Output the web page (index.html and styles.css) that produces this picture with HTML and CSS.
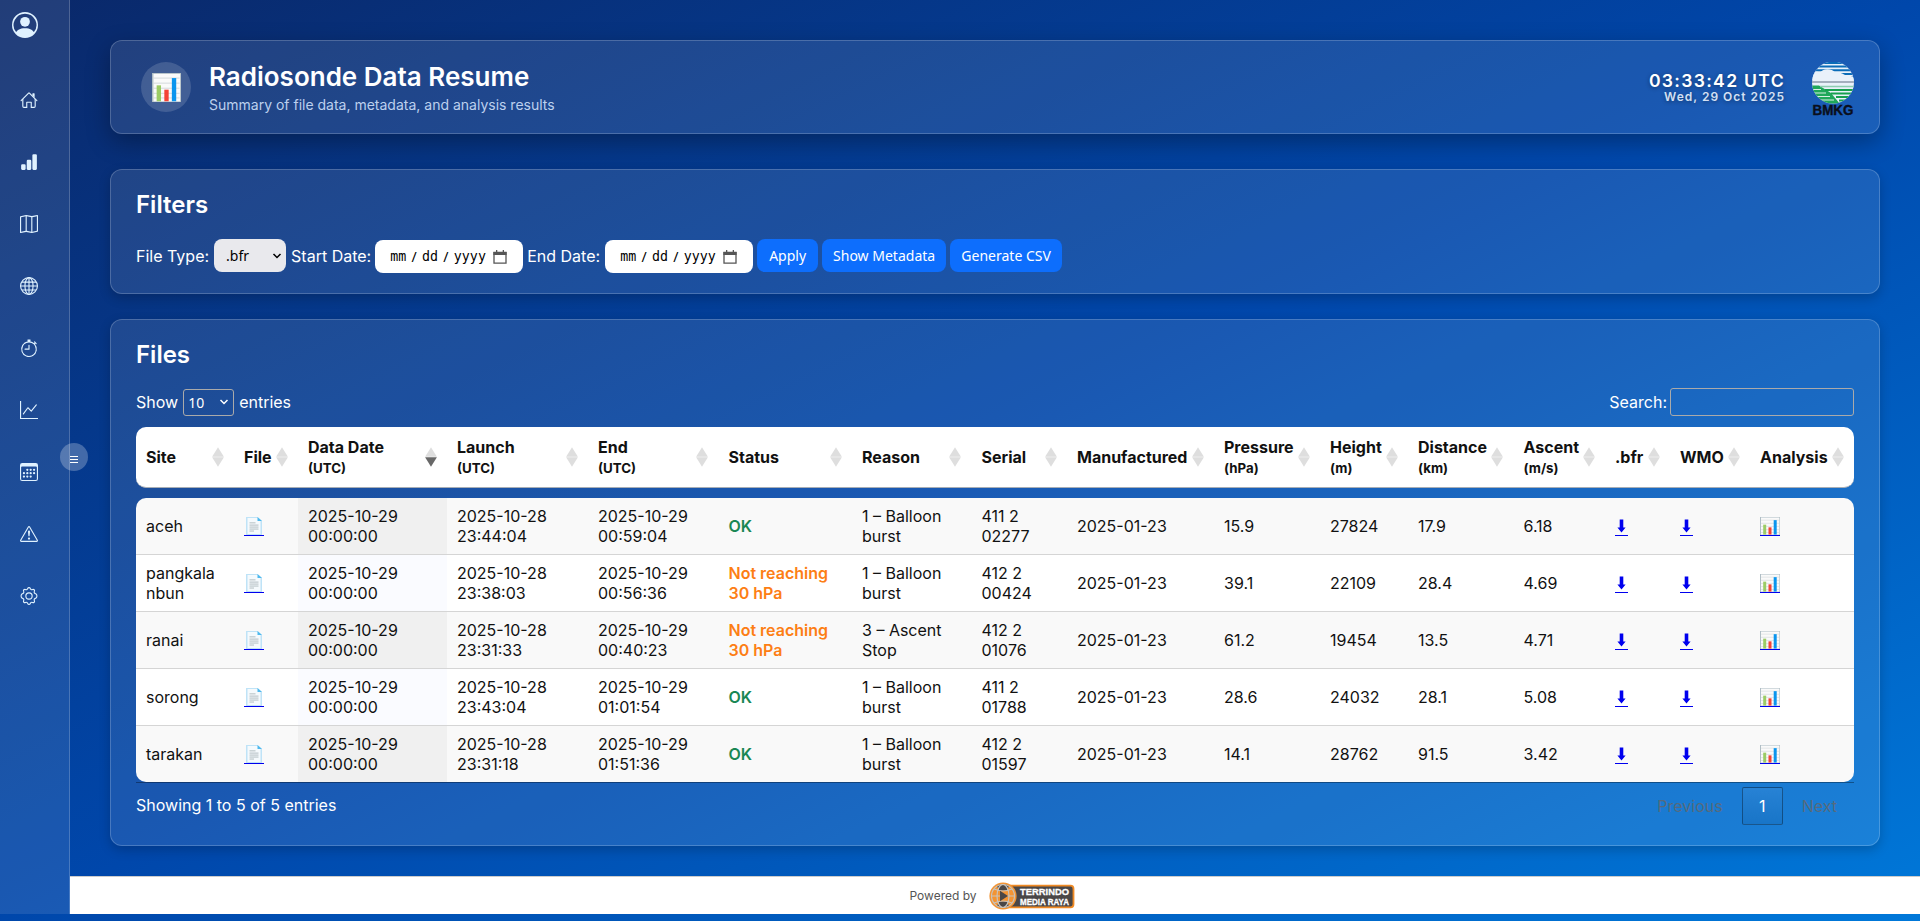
FILE: index.html
```html
<!DOCTYPE html>
<html lang="en">
<head>
<meta charset="utf-8">
<title>Radiosonde Data Resume</title>
<link rel="stylesheet" href="styles.css">
</head>
<body>
<svg class="defs" width="0" height="0" aria-hidden="true">
  <symbol id="doc" viewBox="0 0 20 20" preserveAspectRatio="none">
    <path d="M2 0h11.500l4.500 4.500v15.500h-16z" fill="#bfe3f7"/>
    <path d="M3.500 1h10l3 4v14h-13z" fill="#f5fafd"/>
    <path d="M13.500 0l4.500 4.500h-4.500z" fill="#4fb9ee"/>
    <path d="M5.500 6.500h6M5.500 9h9M5.500 11.200h9M5.500 13.400h9M5.500 15.600h4.500" stroke="#b0babf" stroke-width="1"/>
  </symbol>
  <symbol id="chart" viewBox="0 0 20 20" preserveAspectRatio="none">
    <rect width="20" height="20" fill="#b0bec5"/>
    <rect x="1" y=".6" width="18.400" height="19" fill="#fafafa"/>
    <path d="M1 3.500h18M1 7h18M1 10.500h18M1 14h18M1 17.200h18" stroke="#cfd4d8" stroke-width=".6"/>
    <rect x="3.200" y="8.500" width="3" height="11" fill="#9ccc65"/>
    <rect x="8.500" y="11.500" width="3" height="8" fill="#f44336"/>
    <rect x="13.700" y="3.500" width="3" height="16" fill="#0a95ee"/>
  </symbol>
</svg>
<div class="shell">
  <nav class="side">
    <svg class="user" viewBox="0 0 16 16"><path d="M11 6a3 3 0 1 1-6 0 3 3 0 0 1 6 0"/><path fill-rule="evenodd" d="M0 8a8 8 0 1 1 16 0A8 8 0 0 1 0 8m8-7a7 7 0 0 0-5.468 11.370C3.242 11.226 4.805 10 8 10s4.757 1.225 5.468 2.370A7 7 0 0 0 8 1"/></svg>
    <svg class="ic" viewBox="0 0 16 16"><path fill-rule="evenodd" d="M2 13.500V7h1v6.500a.5.5 0 0 0 .5.5h2v-4A.5.5 0 0 1 6 9.500h4a.5.5 0 0 1 .5.5v4h2a.5.5 0 0 0 .5-.5V7h1v6.500a1.500 1.500 0 0 1-1.500 1.500h-3v-4.500h-3V15h-3A1.500 1.500 0 0 1 2 13.500m11-11V6l-2-2V2.500a.5.5 0 0 1 .5-.5h1a.5.5 0 0 1 .5.5"/><path fill-rule="evenodd" d="M7.293 1.500a1 1 0 0 1 1.414 0l6.647 6.646a.5.5 0 0 1-.708.708L8 2.207 1.354 8.854a.5.5 0 1 1-.708-.708z"/></svg>
    <svg class="ic" viewBox="0 0 16 16"><path d="M1 11a1 1 0 0 1 1-1h2a1 1 0 0 1 1 1v3a1 1 0 0 1-1 1H2a1 1 0 0 1-1-1zm5-4a1 1 0 0 1 1-1h2a1 1 0 0 1 1 1v7a1 1 0 0 1-1 1H7a1 1 0 0 1-1-1zm5-5a1 1 0 0 1 1-1h2a1 1 0 0 1 1 1v12a1 1 0 0 1-1 1h-2a1 1 0 0 1-1-1z"/></svg>
    <svg class="ic" viewBox="0 0 16 16"><path fill-rule="evenodd" d="M15.817.113A.5.5 0 0 1 16 .5v14a.5.5 0 0 1-.402.490l-5 1a.5.5 0 0 1-.196 0L5.500 15.010l-4.902.980A.5.5 0 0 1 0 15.500v-14a.5.5 0 0 1 .402-.490l5-1a.5.5 0 0 1 .196 0L10.500.990l4.902-.980a.5.5 0 0 1 .415.103M10 1.910l-4-.8v12.980l4 .8zm1 12.980 4-.8V1.110l-4 .8zm-6-.8V1.110l-4 .8v12.980z"/></svg>
    <svg class="ic line" viewBox="0 0 16 16"><circle cx="8" cy="8" r="7.500"/><ellipse cx="8" cy="8" rx="3.600" ry="7.500"/><path d="M8 .5v15M.5 8h15M1.700 4.500h12.600M1.700 11.500h12.600"/></svg>
    <svg class="ic" viewBox="0 0 16 16"><path d="M8.500 5.600a.5.5 0 1 0-1 0v2.900h-3a.5.5 0 0 0 0 1H8a.5.5 0 0 0 .5-.5z"/><path d="M6.500 1A.5.5 0 0 1 7 .5h2a.5.5 0 0 1 0 1v.570c1.360.196 2.594.780 3.584 1.640l.012-.013.354-.354-.354-.353a.5.5 0 0 1 .707-.708l1.414 1.415a.5.5 0 1 1-.707.707l-.353-.354-.354.354-.013.012A7 7 0 1 1 7 2.071V1.500a.5.5 0 0 1-.5-.5M8 3a6 6 0 1 0 .001 12A6 6 0 0 0 8 3"/></svg>
    <svg class="ic" viewBox="0 0 16 16"><path fill-rule="evenodd" d="M0 0h1v15h15v1H0zm14.817 3.113a.5.5 0 0 1 .070.704l-4.500 5.500a.5.5 0 0 1-.740.037L7.060 6.767l-3.656 5.027a.5.5 0 0 1-.808-.588l4-5.500a.5.5 0 0 1 .758-.060l2.609 2.610 4.150-5.073a.5.5 0 0 1 .704-.070"/></svg>
    <svg class="ic" viewBox="0 0 16 16"><path fill-rule="evenodd" d="M14 0H2a2 2 0 0 0-2 2v12a2 2 0 0 0 2 2h12a2 2 0 0 0 2-2V2a2 2 0 0 0-2-2M1 3.857C1 3.384 1.448 3 2 3h12c.552 0 1 .384 1 .857v10.286c0 .473-.448.857-1 .857H2c-.552 0-1-.384-1-.857z"/><path d="M6.500 7a1 1 0 1 0 0-2 1 1 0 0 0 0 2m3 0a1 1 0 1 0 0-2 1 1 0 0 0 0 2m3 0a1 1 0 1 0 0-2 1 1 0 0 0 0 2m-9 3a1 1 0 1 0 0-2 1 1 0 0 0 0 2m3 0a1 1 0 1 0 0-2 1 1 0 0 0 0 2m3 0a1 1 0 1 0 0-2 1 1 0 0 0 0 2m3 0a1 1 0 1 0 0-2 1 1 0 0 0 0 2m-9 3a1 1 0 1 0 0-2 1 1 0 0 0 0 2m3 0a1 1 0 1 0 0-2 1 1 0 0 0 0 2m3 0a1 1 0 1 0 0-2 1 1 0 0 0 0 2"/></svg>
    <svg class="ic" viewBox="0 0 16 16"><path fill-rule="evenodd" d="M7.938 2.016A.13.130 0 0 1 8.002 2a.13.130 0 0 1 .063.016.15.150 0 0 1 .054.057l6.857 11.667c.036.060.035.124.002.183a.2.200 0 0 1-.054.060.1.100 0 0 1-.066.017H1.146a.1.100 0 0 1-.066-.017.2.200 0 0 1-.054-.060.18.180 0 0 1 .002-.183L7.884 2.073a.15.150 0 0 1 .054-.057m1.044-.450a1.130 1.130 0 0 0-1.960 0L.165 13.233c-.457.778.091 1.767.980 1.767h13.713c.889 0 1.438-.990.980-1.767z"/><path d="M7.002 12a1 1 0 1 1 2 0 1 1 0 0 1-2 0M7.100 5.995a.905.905 0 1 1 1.800 0l-.350 3.507a.552.552 0 0 1-1.100 0z"/></svg>
    <svg class="ic line" viewBox="0 0 16 16"><circle cx="8" cy="8" r="2.800"/><path stroke-linejoin="round" d="M6.900 1.300c.3-1 1.900-1 2.200 0 .3 1 1.200 1.400 2.100.9 1-.5 2.100.6 1.600 1.600-.5.900-.1 1.800.9 2.100 1.800.3 1.800 3.900 0 4.200-1 .3-1.400 1.200-.9 2.100.5 1-.6 2.100-1.600 1.600-.9-.5-1.800-.1-2.100.9-.3 1-1.900 1-2.200 0-.3-1-1.200-1.400-2.100-.9-1 .5-2.100-.6-1.600-1.600.5-.9.100-1.800-.9-2.100-1.800-.3-1.800-3.900 0-4.200 1-.3 1.400-1.200.9-2.100-.5-1 .6-2.100 1.600-1.600.9.500 1.800.1 2.100-.9z"/></svg>
    <span class="toggle"><i></i></span>
  </nav>
  <div class="page">
    <main>
      <header class="card head">
        <span class="badge"><svg><use href="#chart"/></svg></span>
        <div class="titles"><h1>Radiosonde Data Resume</h1><p>Summary of file data, metadata, and analysis results</p></div>
        <div class="clock"><b>03:33:42 UTC</b><span>Wed, 29 Oct 2025</span></div>
        <svg class="bmkg" viewBox="0 0 42 54">
          <clipPath id="disc"><circle cx="21" cy="20.500" r="21"/></clipPath>
          <g clip-path="url(#disc)">
            <rect width="42" height="42" fill="#e9f1fa"/>
            <path d="M0 1h42M0 4.500h42M0 8.200h42M0 12h42M0 15.500h42" stroke="#0a6cb8" stroke-width="1.900"/>
            <path d="M0 18v-4c0-5 6-5 8-3 2-5 12-5 15-.500 5-1 8 2 12 3.500 5-1 8 2 8 5z" fill="#e9f1fa"/>
            <path d="M0 20h42" stroke="#8d98a8" stroke-width="1.600"/>
            <path d="M0 23.500h7l12 7.500 9 11H0z" fill="#1fa85a"/>
            <path d="M0 27.500h9M0 31h14M0 34.500h18M0 38h22" stroke="#d7eee3" stroke-width="1.100"/>
            <path d="M8 24.500h34" stroke="#8ccdb0" stroke-width="1.700"/>
            <path d="M13 28h29M19 31.500h23M24 35h18M27 38.500h15" stroke="#17a04e" stroke-width="1.900"/>
          </g>
          <text x="21" y="53" text-anchor="middle" textLength="41" lengthAdjust="spacingAndGlyphs">BMKG</text>
        </svg>
      </header>
      <section class="card filters">
        <h2>Filters</h2>
        <div class="row">
          <label>File Type:</label><span class="sel">.bfr<svg viewBox="0 0 10 10"><path d="M1.500 3L5 6.500 8.500 3"/></svg></span>
          <label>Start Date:</label><span class="date"><span>mm</span><i>/</i><span>dd</span><i>/</i><span>yyyy</span><svg viewBox="0 0 14 14"><path d="M1 2.500h12v10.700H1z"/><path class="f" d="M.4 2h13.200v3H.4zM3 0h1.300v2H3zM9.700 0H11v2H9.700z"/></svg></span>
          <label>End Date:</label><span class="date end"><span>mm</span><i>/</i><span>dd</span><i>/</i><span>yyyy</span><svg viewBox="0 0 14 14"><path d="M1 2.500h12v10.700H1z"/><path class="f" d="M.4 2h13.200v3H.4zM3 0h1.300v2H3zM9.700 0H11v2H9.700z"/></svg></span>
          <button class="b1">Apply</button><button class="b2">Show Metadata</button><button class="b3">Generate CSV</button>
        </div>
      </section>
      <section class="card files">
        <h2>Files</h2>
        <div class="tools">
          <span>Show</span><span class="len">10<svg viewBox="0 0 10 10"><path d="M1.500 3L5 6.500 8.500 3"/></svg></span><span>entries</span>
          <span class="search">Search:</span><input type="text">
        </div>
        <div class="table" id="table"></div>
        <div class="foot"><span class="info">Showing 1 to 5 of 5 entries</span><span class="pg">Previous</span><span class="pg cur">1</span><span class="pg">Next</span></div>
      </section>
    </main>
    <footer>
      <span>Powered by</span>
      <svg class="terr" viewBox="0 0 86 28">
        <rect x="14" y="3.700" width="70.500" height="21.600" rx="3" fill="#4a4747" stroke="#f08a24" stroke-width="1.800"/>
        <circle cx="14" cy="14" r="13.600" fill="#f39433"/>
        <path d="M8 4q6-4 12 0L18 8.500h-8zM8 24q6 4 12 0L18 19.500h-8z" fill="#4a4747"/>
        <g fill="none" stroke="#c9c3bb" stroke-width="1.200"><circle cx="14" cy="14" r="11.500"/><ellipse cx="14" cy="14" rx="6" ry="11.500"/><path d="M2.500 14h23M5 7q9 4 18 0M5 21q9-4 18 0"/></g>
        <path d="M11 8.800l8 5.200-8 5.200z" fill="#4a4747"/>
        <text x="31" y="12.800" textLength="49" lengthAdjust="spacingAndGlyphs">TERRINDO</text>
        <text x="31" y="23.300" textLength="49" lengthAdjust="spacingAndGlyphs">MEDIA RAYA</text>
      </svg>
    </footer>
  </div>
</div>
<script src="table.js"></script>
</body>
</html>
```
FILE: table.js
```js
const heads = ['Site', 'File', 'Data Date|(UTC)', 'Launch|(UTC)', 'End|(UTC)', 'Status', 'Reason', 'Serial', 'Manufactured',
  'Pressure|(hPa)', 'Height|(m)', 'Distance|(km)', 'Ascent|(m/s)', '.bfr', 'WMO', 'Analysis'];
const low = 'Not reaching|30 hPa';
const burst = '1 – Balloon|burst';
const rows = [
  ['aceh', '23:44:04', '00:59:04', 'OK', burst, '411 2|02277', '15.9', '27824', '17.9', '6.18'],
  ['pangkala|nbun', '23:38:03', '00:56:36', low, burst, '412 2|00424', '39.1', '22109', '28.4', '4.69'],
  ['ranai', '23:31:33', '00:40:23', low, '3 – Ascent|Stop', '412 2|01076', '61.2', '19454', '13.5', '4.71'],
  ['sorong', '23:43:04', '01:01:54', 'OK', burst, '411 2|01788', '28.6', '24032', '28.1', '5.08'],
  ['tarakan', '23:31:18', '01:51:36', 'OK', burst, '412 2|01597', '14.1', '28762', '91.5', '3.42']
];
const br = s => s.replace('|', '<br>');
const icon = id => `<span class="lnk"><svg><use href="#${id}"/></svg></span>`;
const arrow = '<span class="dl"><svg viewBox="0 0 13 20"><path d="M4.700 3.500h3.600v8h2.300L6.500 16.500 2.400 11.500h2.300z"/></svg></span>';
const cell = (html, cls = '') => `<div class="td ${cls}"><div>${html}</div></div>`;

let out = '<div class="tr th">' + heads.map((h, i) => {
  const [a, b] = h.split('|');
  return `<div class="td${i === 2 ? ' desc' : ''}"><div>${a}${b ? `<small>${b}</small>` : ''}</div>` +
    '<svg class="sort" viewBox="0 0 12 20"><path d="M6 .3l5.900 9.500H.1z"/><path d="M6 19.700l5.900-9.500H.1z"/></svg></div>';
}).join('') + '</div><div class="tbody">';
for (const r of rows) {
  out += '<div class="tr">' + [
    cell(br(r[0])), cell(icon('doc')), cell('2025-10-29<br>00:00:00', 'sorted'),
    cell('2025-10-28<br>' + r[1]), cell('2025-10-29<br>' + r[2]),
    cell(br(r[3]), r[3] === 'OK' ? 'ok' : 'low'), cell(br(r[4])), cell(br(r[5])), cell('2025-01-23'),
    cell(r[6]), cell(r[7]), cell(r[8]), cell(r[9]), cell(arrow), cell(arrow), cell(icon('chart'))
  ].join('') + '</div>';
}
document.getElementById('table').innerHTML = out + '</div>';
```
FILE: styles.css
```css
* { box-sizing: border-box; }
body { margin: 0; height: 921px; overflow: hidden; font: 16px/20px Inter, sans-serif; color: #fff; background: linear-gradient(to bottom right, #0a2869 0%, #0047ab 50%, #0078d9 100%); }
.defs { position: absolute; }
h1, h2, p { margin: 0; }
.shell { display: flex; height: 914px; }
.side { position: relative; width: 70px; background: rgba(255,255,255,.1); border-right: 1px solid rgba(255,255,255,.2); display: flex; flex-direction: column; padding: 12px 0 0 20px; fill: #e0f2ff; }
.user { width: 26px; height: 26px; margin: 0 0 53px -8px; }
.ic { width: 18px; height: 18px; margin-bottom: 44px; flex: none; overflow: visible; }
.line { fill: none; stroke: #e0f2ff; stroke-width: 1; }
.toggle { position: absolute; left: 60px; top: 443px; width: 28px; height: 28px; border-radius: 50%; background: rgba(255,255,255,.25); z-index: 2; display: flex; align-items: center; justify-content: center; }
.toggle i { width: 8px; height: 7px; margin-top: 5px; border: solid #fff; border-width: 1px 0; background: linear-gradient(#fff, #fff) 0 50% / 100% 1px no-repeat; }
.page { flex: 1; display: flex; flex-direction: column; }
main { flex: 1; padding: 40px 40px 0; display: flex; flex-direction: column; }
.card { border: 1px solid rgba(255,255,255,.2); border-radius: 12px; background: rgba(255,255,255,.1); box-shadow: 0 4px 12px rgba(0,0,0,.2); padding: 20px 25px; }
.head { height: 94px; margin-bottom: 35px; padding: 0 25px 0 30px; display: flex; align-items: center; box-shadow: 0 8px 24px rgba(0,0,0,.3); }
.badge { width: 50px; height: 50px; border-radius: 50%; background: rgba(255,255,255,.15); display: grid; place-items: center; margin-right: 18px; }
.badge svg { width: 29px; height: 29px; }
.titles { flex: 1; }
h1 { font-size: 26px; line-height: 31px; font-weight: 600; }
.titles p { font-size: 14px; line-height: 17px; margin-top: 4px; color: #bcd0ee; }
.clock { display: flex; flex-direction: column; align-items: flex-end; text-shadow: 0 1px 4px rgba(0,0,0,.4); margin-right: 27px; margin-top: 1px; }
.clock b { font-size: 17.6px; font-weight: 600; letter-spacing: 1.300px; line-height: 17px; }
.clock span { font-size: 12px; font-weight: 600; letter-spacing: 1px; line-height: 15px; color: #d3e0f4; }
.bmkg { width: 42px; height: 54px; margin-top: 3px; overflow: visible; }
.bmkg text { font: bold 14px "Liberation Sans", sans-serif; fill: #0a0f1c; stroke: #0a0f1c; stroke-width: .4; }
.filters { height: 125px; margin-bottom: 25px; }
h2 { font-size: 24px; line-height: 30px; font-weight: 600; }
.row { display: flex; align-items: center; margin-top: 18px; }
.sel { width: 72px; height: 33px; margin: 0 5px 0 5px; border-radius: 8px; background: #e9e9ed; color: #000; font: 14px/33px "Noto Sans", sans-serif; padding: 0 4px 0 12px; display: flex; align-items: center; justify-content: space-between; }
.sel svg, .len svg { width: 10px; height: 10px; fill: none; stroke: currentColor; stroke-width: 1.500; }
.date { width: 148px; height: 33px; margin: 2px 4px 0 4px; border-radius: 8px; background: #fff; color: #000; font: 13.3px "DejaVu Sans Mono", monospace; padding: 0 16px 0 15px; display: flex; align-items: center; justify-content: space-between; }
.date.end { margin-left: 5px; }
.date i { font: 14px "Noto Sans", sans-serif; }
.date svg { width: 14px; height: 14px; fill: none; stroke: #555; stroke-width: 1.300; margin-left: 2px; }
.date .f { fill: #555; stroke: none; }
button { height: 33px; border: 0; border-radius: 8px; background: #0d6efd; color: #fff; font: 14px "Noto Sans", sans-serif; padding: 0; margin-right: 4px; white-space: nowrap; }
.b1 { width: 61px; } .b2 { width: 124px; } .b3 { width: 112px; }
.files { height: 527px; }
.tools { display: flex; align-items: center; height: 28px; margin-top: 18px; margin-bottom: 11px; gap: 5px; }
.len { width: 51px; height: 27px; border: 1px solid #aaa; border-radius: 3px; padding: 0 4px; font: 14px "Noto Sans", sans-serif; display: flex; align-items: center; justify-content: space-between; }
.search { margin-left: auto; }
input { width: 184px; height: 28px; border: 1px solid #aaa; border-radius: 3px; background: transparent; margin-left: -2px; }
.table { color: #111; border-bottom: 1px solid rgba(0,0,0,.35); }
.tr { display: grid; grid-template-columns: 98px 64px 149px 141px 130.500px 133.500px 119.500px 95.500px 147px 106px 88px 105.500px 91.500px 65px 80px 1fr; height: 57px; background: #fff; border-top: 1px solid #d5d5d5; }
.tr:nth-child(odd) { background: #f9f9f9; }
.tr:first-child { height: 56px; border-top: 0; }
.tr.th { height: 61px; background: #fff; border-radius: 10px; border-bottom: 1px solid #a8aeb5; margin-bottom: 10px; font-weight: 700; }
.tbody { border-radius: 10px; overflow: hidden; }
.td { padding: 0 10px; display: flex; align-items: center; white-space: nowrap; }
.th .td { justify-content: space-between; padding-right: 10.500px; }
small { display: block; font-size: 13.3px; line-height: 20px; margin-top: 1px; }
.sort { width: 12px; height: 20px; flex: none; fill: #dedede; }
.desc path:last-child { fill: #686868; }
.sorted { background: #fafbff; }
.tr:nth-child(odd) .sorted { background: #f0f0f0; }
.ok { color: #198754; font-weight: 600; }
.low { color: #fd7e14; font-weight: 600; }
.lnk { display: block; width: 20px; height: 19px; border-bottom: 1px solid #00e; margin-top: 1px; }
.lnk svg { display: block; width: 20px; height: 18px; }
.dl { display: block; width: 13px; height: 20px; border-bottom: 1px solid #00e; }
.dl svg { display: block; width: 13px; height: 20px; fill: #00e; }
.foot { display: flex; align-items: center; margin-top: 4px; height: 38px; color: rgba(102,102,102,.8); }
.info { color: #fff; margin: -2px auto 0 0; }
.pg { padding: 0 17px; }
.cur { color: #fff; height: 38px; line-height: 37px; width: 41px; margin: 0 2px; text-align: center; padding: 0; border: 1px solid rgba(0,0,0,.35); border-radius: 2px; background: linear-gradient(rgba(255,255,255,.06), rgba(0,0,0,.06)); }
footer { height: 38px; background: #fff; border-top: 1px solid #ccc; color: #555; font-size: 12px; display: flex; justify-content: center; align-items: center; gap: 12px; padding-right: 6px; }
.terr { width: 86px; height: 28px; overflow: visible; }
.terr text { font: bold 9.500px "Liberation Sans", sans-serif; fill: #fff; stroke: #fff; stroke-width: .3; }
```
